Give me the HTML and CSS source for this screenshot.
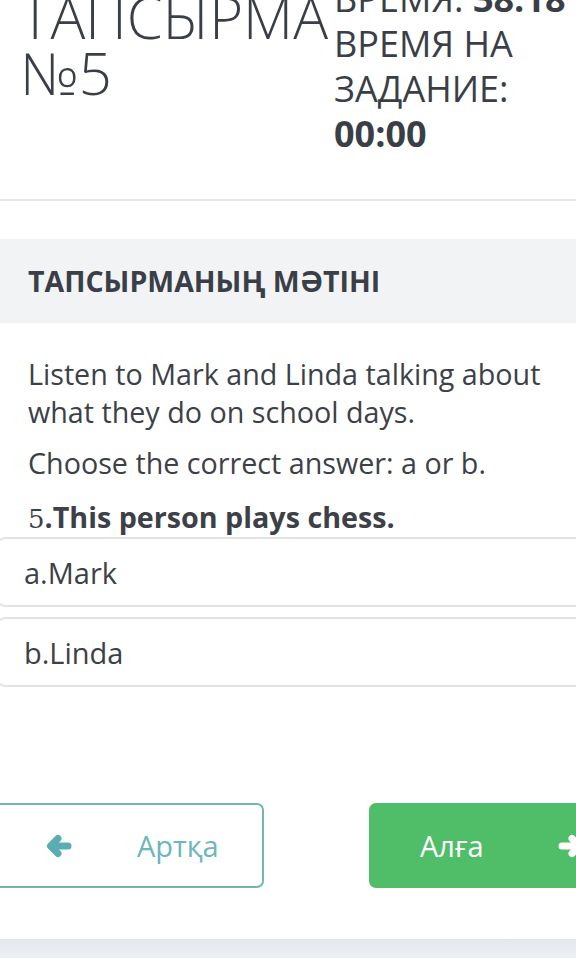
FILE: index.html
```html
<!DOCTYPE html>
<html lang="ru">
<head>
<meta charset="utf-8">
<title>Тапсырма №5</title>
<link rel="stylesheet" href="styles.css">
</head>
<body>
<div class="page">
  <header class="header">
    <h1 class="title">ТАПСЫРМА<br>№5</h1>
    <div class="timers">
      <div class="nowrap">ВРЕМЯ: <b>38:18</b></div>
      <div>ВРЕМЯ НА ЗАДАНИЕ:</div>
      <div><b>00:00</b></div>
    </div>
  </header>

  <section class="task">
    <h2 class="task-head">ТАПСЫРМАНЫҢ МӘТІНІ</h2>
    <div class="task-body">
      <p class="p1">Listen to Mark and Linda talking about what they do on school days.</p>
      <p class="p2">Choose the correct answer: a or b.</p>
      <p class="q"><span class="num">5</span>.This person plays chess.</p>
    </div>
    <div class="options">
      <div class="option">a.Mark</div>
      <div class="option">b.Linda</div>
    </div>
  </section>

  <nav class="nav">
    <button class="btn btn-back">
      <svg class="ico" width="28" height="24" viewBox="0 0 28 24"><path d="M23 12H6M13 4.5L5.5 12L13 19.5" fill="none" stroke="currentColor" stroke-width="7" stroke-linecap="round" stroke-linejoin="round"/></svg>
      <span>Артқа</span>
    </button>
    <button class="btn btn-next">
      <span>Алға</span>
      <svg class="ico" width="28" height="24" viewBox="0 0 28 24"><path d="M5 12H22M15 4.5L22.5 12L15 19.5" fill="none" stroke="currentColor" stroke-width="7" stroke-linecap="round" stroke-linejoin="round"/></svg>
    </button>
  </nav>

  <div class="footer-band"></div>
</div>
</body>
</html>
```

FILE: styles.css
```css
html, body {
  margin: 0;
  padding: 0;
  background: #ffffff;
  overflow: hidden;
}
body {
  width: 576px;
  height: 958px;
  font-family: "Open Sans", "Noto Sans", sans-serif;
  color: #3c4148;
}
.page {
  margin-top: -24px;
}
.header {
  display: flex;
  padding-left: 20px;
  padding-bottom: 43px;
  border-bottom: 2px solid #e7e8ea;
}
.title {
  margin: 0;
  padding-top: 13px;
  width: 314px;
  flex: none;
  font-size: 58px;
  font-weight: 300;
  line-height: 56px;
  white-space: nowrap;
  color: #3a3f47;
}
.timers {
  width: 210px;
  flex: none;
  font-size: 36px;
  line-height: 45px;
  color: #3a3f47;
}
.nowrap {
  white-space: nowrap;
}
.timers b {
  font-weight: 700;
}
.task {
  margin-top: 38px;
}
.task-head {
  margin: 0;
  height: 84px;
  display: flex;
  align-items: center;
  padding-left: 28px;
  background: #f2f3f5;
  font-size: 28.5px;
  font-weight: 700;
  color: #3a3f47;
}
.task-body {
  padding: 32px 20px 0 28px;
  font-size: 28.7px;
  line-height: 38px;
}
.task-body p {
  margin: 0;
}
.task-body .p2 {
  margin-top: 13px;
}
.task-body .q {
  margin-top: 16px;
  font-weight: 700;
  white-space: nowrap;
}
.num {
  font-family: "DejaVu Serif", "Liberation Serif", serif;
  font-weight: 400;
  font-size: 26px;
}
.options {
  margin-top: -1px;
  margin-left: -6px;
  display: flex;
  flex-direction: column;
  gap: 10px;
}
.option {
  width: 620px;
  height: 66px;
  display: flex;
  align-items: center;
  padding-left: 28px;
  border: 2px solid #e2e3e5;
  border-radius: 12px;
  font-size: 29px;
  color: #3c4148;
}
.nav {
  margin-top: 116px;
  display: flex;
  gap: 105px;
}
.btn {
  flex: none;
  height: 85px;
  border-radius: 7px;
  display: flex;
  align-items: center;
  font-family: "Open Sans", "Noto Sans", sans-serif;
  font-size: 29px;
  padding: 0;
  cursor: pointer;
}
.btn-back {
  margin-left: -40px;
  width: 304px;
  background: #ffffff;
  border: 2px solid #74b5b5;
  color: #6db6b9;
  padding-left: 83px;
  gap: 64px;
}
.btn-back .ico {
  color: #5aadb0;
}
.btn-next {
  width: 280px;
  background: #50be69;
  border: 2px solid #50be69;
  color: #ffffff;
  padding-left: 49px;
  gap: 73px;
}
.ico {
  flex: none;
  display: block;
}
.footer-band {
  margin-top: 51px;
  height: 30px;
  background: linear-gradient(#e3e7eb, #f3f5f8);
}
```
